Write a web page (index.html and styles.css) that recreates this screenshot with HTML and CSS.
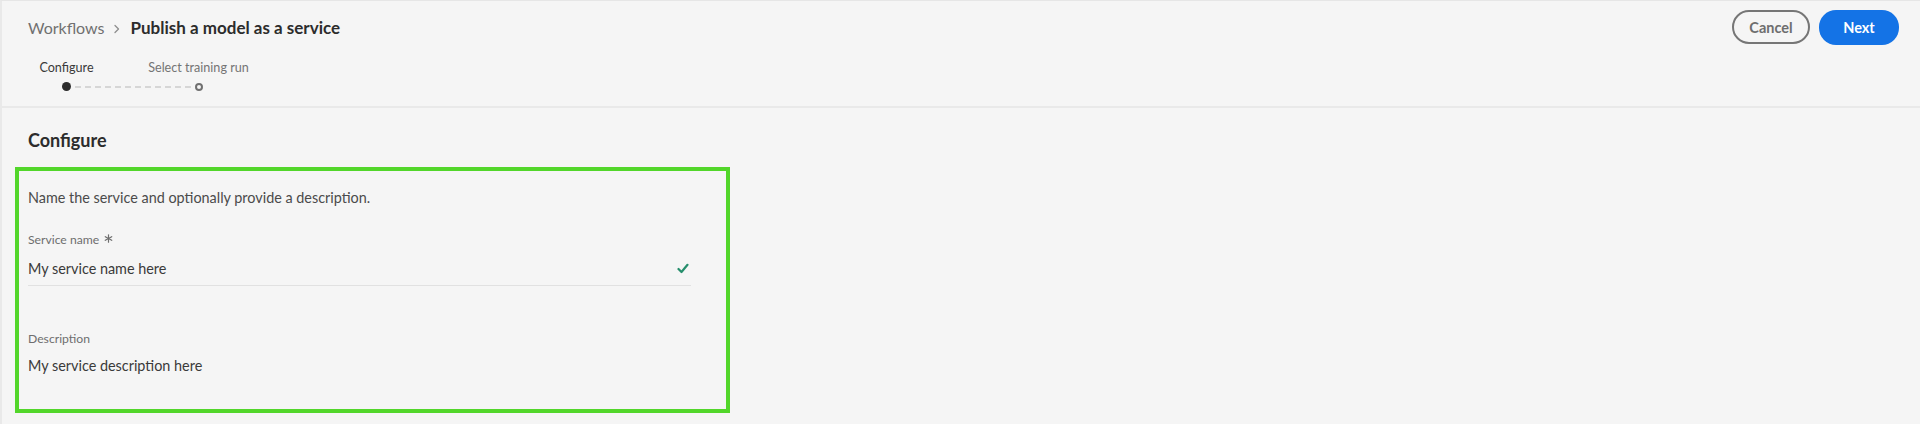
FILE: index.html
```html
<!DOCTYPE html>
<html lang="en">
<head>
<meta charset="utf-8">
<title>Publish a model as a service</title>
<link rel="stylesheet" href="styles.css">
</head>
<body>
<div class="page">
  <header class="header">
    <div class="header-left">
      <nav class="breadcrumb">
        <span class="crumb">Workflows</span>
        <svg class="chev" width="8" height="10" viewBox="0 0 8 10"><path d="M2 1.5 L5.5 5 L2 8.5" fill="none" stroke="#8e8e8e" stroke-width="1.3" stroke-linecap="round" stroke-linejoin="round"/></svg>
        <span class="crumb-current">Publish a model as a service</span>
      </nav>
      <div class="steps">
        <div class="step-labels">
          <span class="step-label active">Configure</span>
          <span class="step-label">Select training run</span>
        </div>
        <div class="step-track">
          <span class="dot"></span>
          <span class="dashes"></span>
          <span class="ring"></span>
        </div>
      </div>
    </div>
    <div class="actions">
      <button class="btn btn-secondary">Cancel</button>
      <button class="btn btn-primary">Next</button>
    </div>
  </header>
  <main class="main">
    <h1 class="heading">Configure</h1>
    <section class="form-box">
      <p class="intro">Name the service and optionally provide a description.</p>
      <div class="field">
        <label class="caption">Service name
          <svg class="req" width="9" height="9" viewBox="0 0 9 9"><g stroke="#6e6e6e" stroke-width="1.2" stroke-linecap="round"><path d="M4.5 0.8 V8.2"/><path d="M1.3 2.65 L7.7 6.35"/><path d="M1.3 6.35 L7.7 2.65"/></g></svg>
        </label>
        <div class="input input-underlined">
          <span class="value">My service name here</span>
          <svg class="check" width="12" height="11" viewBox="0 0 12 11"><path d="M1.5 6 L4.5 9 L10.5 1.8" fill="none" stroke="#268e6c" stroke-width="2.2" stroke-linecap="round" stroke-linejoin="round"/></svg>
        </div>
      </div>
      <div class="field field-desc">
        <label class="caption">Description</label>
        <div class="input input-plain">
          <span class="value">My service description here</span>
        </div>
      </div>
    </section>
  </main>
</div>
</body>
</html>
```
FILE: styles.css
```css
* { box-sizing: border-box; }
html, body { margin: 0; padding: 0; }
body {
  background: #f5f5f5;
  font-family: Lato, "Open Sans", "Liberation Sans", sans-serif;
  color: #2c2c2c;
}
.page {
  width: 1920px;
  height: 424px;
  border-top: 1px solid #e6e6e6;
  border-left: 2px solid #e9e9e9;
  overflow: hidden;
}
.header {
  display: flex;
  justify-content: space-between;
  align-items: flex-start;
  padding: 9px 21px 15px 26px;
  border-bottom: 2px solid #e9e9e9;
}
.breadcrumb {
  display: flex;
  align-items: center;
  margin-top: 6px;
  height: 24px;
  line-height: 24px;
}
.crumb { color: #707070; font-size: 16px; }
.chev { margin: 1px 10px 0 8px; }
.crumb-current { font-weight: 700; color: #2c2c2c; font-size: 17px; }
.steps { margin-top: 20px; }
.step-labels {
  display: grid;
  grid-template-columns: 104px 104px;
  column-gap: 28px;
  margin-left: -13.5px;
  font-size: 12.6px;
  line-height: 16px;
}
.step-label { text-align: center; color: #747474; white-space: nowrap; }
.step-label.active { color: #3a3a3a; }
.step-track {
  display: flex;
  align-items: center;
  margin-top: 6px;
  margin-left: 34px;
  height: 9px;
}
.dot {
  width: 9px; height: 9px;
  border-radius: 50%;
  background: #2c2c2c;
}
.dashes {
  width: 116px;
  height: 2px;
  margin: 0 4px;
  background: repeating-linear-gradient(90deg, #d6d6d6 0 6px, transparent 6px 10px);
}
.ring {
  width: 8px; height: 8px;
  border-radius: 50%;
  border: 2px solid #707070;
}
.actions { display: flex; gap: 9px; }
.btn {
  height: 34px;
  border-radius: 17px;
  font-family: inherit;
  font-size: 14.5px;
  font-weight: 700;
  padding: 0;
  cursor: pointer;
}
.btn-secondary {
  width: 78px;
  background: transparent;
  border: 2px solid #767676;
  color: #6e6e6e;
}
.btn-primary {
  width: 80px;
  background: #1473e6;
  border: none;
  color: #fff;
  height: 35px;
}
.main { padding: 20px 0 0 13px; }
.heading {
  margin: 0 0 15px 13px;
  font-size: 18px;
  line-height: 24px;
  font-weight: 700;
  color: #2c2c2c;
}
.form-box {
  width: 715px;
  height: 246px;
  border: 4px solid #52d62a;
  padding: 17px 0 0 9px;
}
.intro {
  margin: 0;
  font-size: 14.4px;
  line-height: 20px;
  color: #4b4b4b;
}
.field { width: 663px; margin-top: 24px; }
.field-desc { margin-top: 45px; }
.caption {
  display: flex;
  align-items: center;
  gap: 5px;
  font-size: 12.2px;
  line-height: 16px;
  color: #6e6e6e;
}
.req { margin-top: -3px; }
.input {
  display: flex;
  align-items: center;
  justify-content: space-between;
  height: 32px;
  margin-top: 5px;
  padding: 0 2px 0 0;
}
.input-underlined {
  height: 33px;
  border-bottom: 1px solid #e1e1e1;
}
.input-plain { margin-top: 3px; }
.value {
  font-size: 14.4px;
  line-height: 20px;
  color: #3a3a3a;
}
.check { margin-top: -1px; }
```
